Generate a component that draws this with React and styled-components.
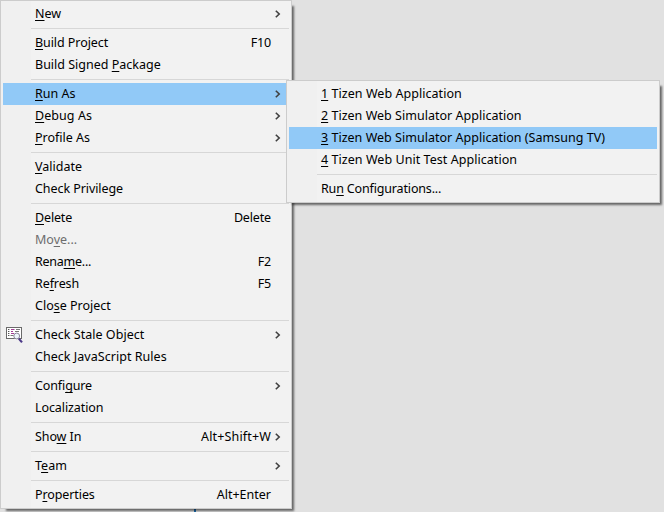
import React from "react";
import styled, { createGlobalStyle } from "styled-components";

const Global = createGlobalStyle`
  * { box-sizing: border-box; }
  body { margin: 0; background: #e1e1e1; overflow: hidden; }
`;

const Desktop = styled.div`
  position: relative;
  width: 664px;
  height: 512px;
  overflow: hidden;
  background: #e1e1e1;
  color: #000;
  font: 12.5px/22px "Noto Sans", sans-serif;
`;

const WindowEdge = styled.div`
  position: absolute;
  left: 194px;
  bottom: 0;
  width: 2px;
  height: 3px;
  background: #1d6fb2;
`;

const Menu = styled.div`
  position: absolute;
  left: ${(p) => p.$x}px;
  top: ${(p) => p.$y}px;
  width: ${(p) => p.$width}px;
  padding: 2px;
  border: 1px solid #ccc;
  background: linear-gradient(to right, #f0f0f0 ${(p) => p.$gutter}px, #f2f2f2 0);
  box-shadow: 4px 4px 2px -2px rgba(0, 0, 0, 0.55);
`;

const Item = styled.div`
  position: relative;
  display: grid;
  grid-template-columns: 1fr auto 18px;
  align-items: center;
  height: 22px;
  padding-left: 32px;
  white-space: nowrap;
  color: ${(p) => (p.$disabled ? "#6d6d6d" : "inherit")};
  background: ${(p) => (p.$active ? "#91c9f7" : "transparent")};
`;

const Label = styled.span`
  letter-spacing: ${(p) => p.$track}px;
`;

const Shortcut = styled(Label)`
  grid-column: 2;
`;

const Mnemonic = styled.span`
  text-decoration: underline;
  text-decoration-thickness: 1px;
  text-underline-offset: 2px;
  text-decoration-skip-ink: none;
`;

const Separator = styled.div`
  height: 7px;
  margin-left: 28px;
  border-top: 3px solid transparent;
  border-bottom: 3px solid transparent;
  background: #d7d7d7;
  background-clip: padding-box;
`;

const Arrow = styled.svg`
  grid-column: 3;
  margin-left: 4px;
`;

const ItemIcon = styled.svg`
  position: absolute;
  left: 3px;
  top: 3px;
`;

const Chevron = () => (
  <Arrow width="6" height="8" viewBox="0 0 6 8" fill="none">
    <path d="M0.8 0.7L4.2 4L0.8 7.3" stroke="#404040" strokeWidth="1.6" />
  </Arrow>
);

const StaleIcon = () => (
  <ItemIcon width="17" height="17" viewBox="0 0 17 17" fill="none">
    <rect x="0.5" y="0.5" width="15" height="11" fill="#fff" stroke="#6a6a6a" />
    <path d="M2 2.5h1.4M2 4.5h1.4M2 6.5h1.4M2 8.5h1.4" stroke="#555" />
    <path d="M5 2.5h3.5M5 4.5h2M5 6.5h3" stroke="#a23b96" />
    <path d="M10 2.5h4M9 4.5h4M4.5 8.5h3" stroke="#777" />
    <circle cx="10.7" cy="9" r="2.9" fill="#edf5fb" stroke="#8c879c" strokeWidth="1" />
    <path d="M12.8 11.6L16 15.4" stroke="#4c3a88" strokeWidth="2.2" />
  </ItemIcon>
);

// An ampersand marks the mnemonic character that follows it.
const Text = ({ value }) => {
  const at = value.indexOf("&");
  if (at < 0) return value;
  return (
    <>
      {value.slice(0, at)}
      <Mnemonic>{value[at + 1]}</Mnemonic>
      {value.slice(at + 2)}
    </>
  );
};

const contextItems = [
  { label: "&New", sub: true },
  null,
  { label: "&Build Project", keys: "F10", track: -0.07, keyTrack: -0.2 },
  { label: "Build Signed &Package" },
  null,
  { label: "&Run As", sub: true, active: true },
  { label: "&Debug As", sub: true, track: 0.06 },
  { label: "&Profile As", sub: true },
  null,
  { label: "&Validate" },
  { label: "Check Privilege", track: -0.07 },
  null,
  { label: "&Delete", keys: "Delete", track: -0.15, keyTrack: -0.15 },
  { label: "Mo&ve...", disabled: true },
  { label: "Rena&me...", keys: "F2", track: -0.25, keyTrack: -0.2 },
  { label: "Re&fresh", keys: "F5", track: -0.1, keyTrack: -0.2 },
  { label: "Clo&se Project" },
  null,
  { label: "Check Stale Object", sub: true, icon: true, track: 0.03 },
  { label: "Check JavaScript Rules", track: 0.04 },
  null,
  { label: "Confi&gure", sub: true, track: -0.12 },
  { label: "Localization", track: -0.09 },
  null,
  { label: "Sho&w In", keys: "Alt+Shift+W", sub: true, track: -0.1, keyTrack: 0.15 },
  null,
  { label: "T&eam", sub: true },
  null,
  { label: "P&roperties", keys: "Alt+Enter", track: -0.1 },
];

const runItems = [
  { label: "&1 Tizen Web Application", track: 0.05 },
  { label: "&2 Tizen Web Simulator Application", track: 0.02 },
  { label: "&3 Tizen Web Simulator Application (Samsung TV)", active: true, track: 0.02 },
  { label: "&4 Tizen Web Unit Test Application", track: 0.05 },
  null,
  { label: "Ru&n Configurations...", track: -0.16 },
];

const MenuItems = ({ items }) =>
  items.map((item, i) =>
    item ? (
      <Item key={i} $active={item.active} $disabled={item.disabled}>
        {item.icon && <StaleIcon />}
        <Label $track={item.track ?? 0}>
          <Text value={item.label} />
        </Label>
        {item.keys && <Shortcut $track={item.keyTrack ?? 0}>{item.keys}</Shortcut>}
        {item.sub && <Chevron />}
      </Item>
    ) : (
      <Separator key={i} />
    )
  );

export default function App() {
  return (
    <Desktop>
      <Global />
      <WindowEdge />
      <Menu $x={0} $y={0} $width={292} $gutter={30}>
        <MenuItems items={contextItems} />
      </Menu>
      <Menu $x={286} $y={80} $width={374} $gutter={30}>
        <MenuItems items={runItems} />
      </Menu>
    </Desktop>
  );
}
